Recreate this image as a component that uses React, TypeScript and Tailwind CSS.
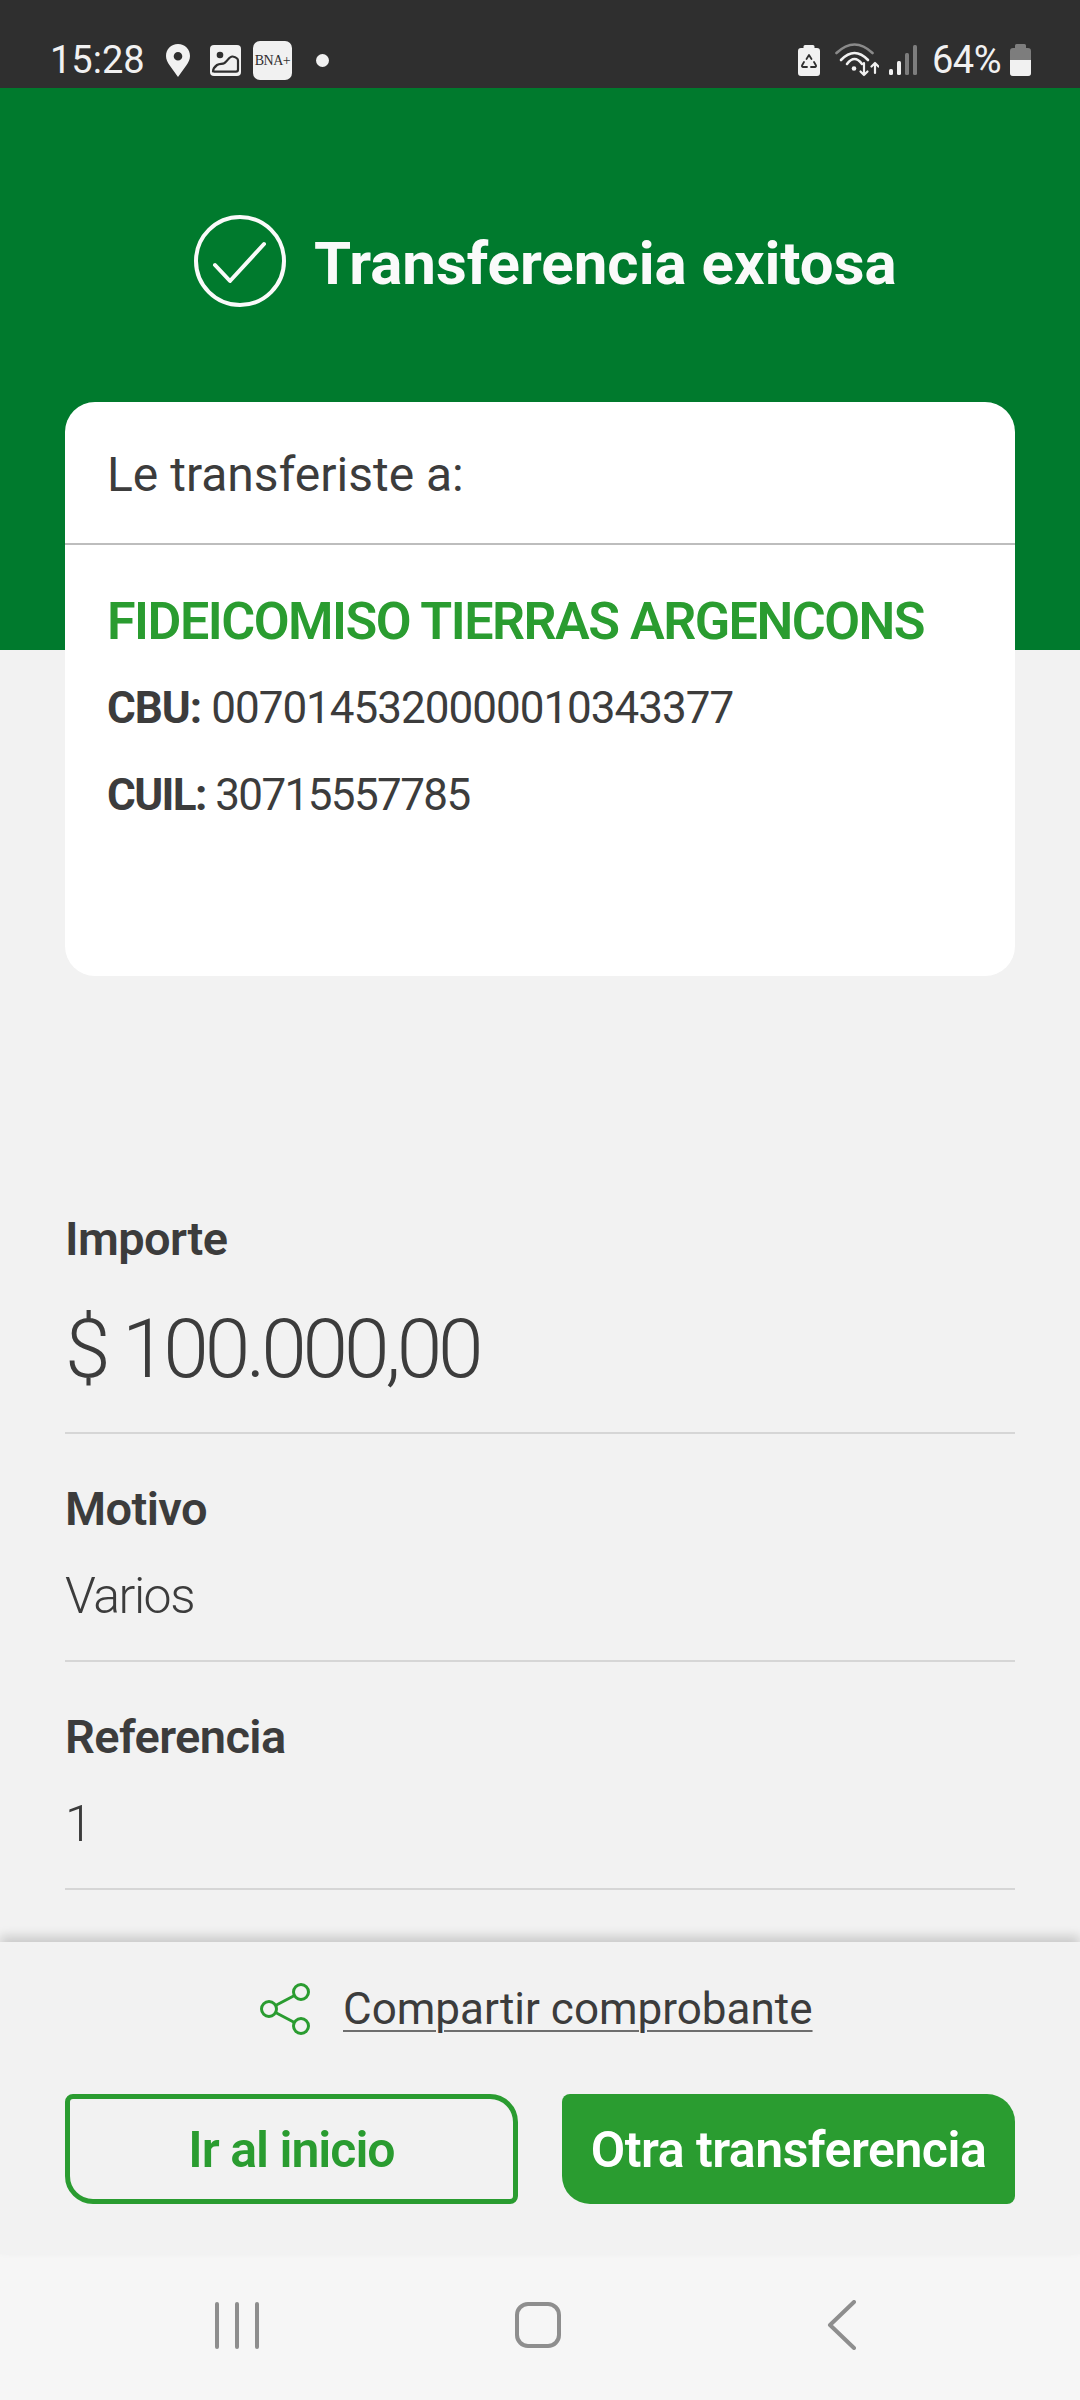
const FONT = "font-['Roboto','Noto_Sans',sans-serif] [font-stretch:90%]";

function Pin() {
  return (
    <svg width="24" height="33" viewBox="0 0 24 33" className="block">
      <path fillRule="evenodd" fill="#f1f1f1" d="M12 0C5 0 0 5.200 0 12c0 3.400 1.600 6.200 3.400 9L12 33l8.600-12c1.800-2.800 3.400-5.600 3.400-9C24 5.200 19 0 12 0zm0 8a4.300 4.300 0 1 1 0 8.600A4.300 4.300 0 0 1 12 8z" />
    </svg>
  );
}

function PictureIcon() {
  return (
    <svg width="31" height="31" viewBox="0 0 31 31" className="block">
      <rect width="31" height="31" rx="4" fill="#f1f1f1" />
      <circle cx="10" cy="10" r="3.300" fill="#2f2f2f" />
      <path d="M3 26.500c0-3 2-5 4-6.500 3-2 5-.5 7.500-2 3-2 5-7 8-6.500 2.500.5 5.500 2 5.500 4v9c0 1.500-.8 2.200-2 2.200H5c-1.300 0-2-.7-2-.2z" fill="none" stroke="#2f2f2f" strokeWidth="2.200" strokeLinejoin="round" />
    </svg>
  );
}

function RecycleBattery() {
  return (
    <svg width="22" height="31" viewBox="0 0 22 31" className="block">
      <path d="M7 0h8a1.500 1.500 0 0 1 1.500 1.500V3H19a3 3 0 0 1 3 3v22a3 3 0 0 1-3 3H3a3 3 0 0 1-3-3V6a3 3 0 0 1 3-3h2.500V1.500A1.500 1.500 0 0 1 7 0z" fill="#f1f1f1" />
      <path d="M8.500 14l2.500-4 2.500 4M16 17l2 3.500c.3.800-.2 1.500-1 1.500h-4M9 22H5c-.8 0-1.300-.7-1-1.500L6 17" fill="none" stroke="#2f2f2f" strokeWidth="1.800" strokeLinecap="round" strokeLinejoin="round" />
    </svg>
  );
}

function Wifi() {
  return (
    <svg width="44" height="34" viewBox="0 0 44 34" fill="none" strokeLinecap="round" strokeLinejoin="round" className="block">
      <path d="M1.500 10Q19.500-7 37.500 10" stroke="#8a8a8a" strokeWidth="2.600" />
      <path d="M6 17Q19.500 3 33 17" stroke="#f1f1f1" strokeWidth="2.600" />
      <path d="M12 21Q19.500 11 27 21" stroke="#f1f1f1" strokeWidth="2.600" />
      <circle cx="19" cy="25.500" r="2.300" fill="#f1f1f1" />
      <path d="M29 20v12m-3.500-3.500L29 32l3.500-3.500" stroke="#f1f1f1" strokeWidth="2.200" />
      <path d="M40 30V20m-3.500 3.500L40 20l3.500 3.500" stroke="#f1f1f1" strokeWidth="2.200" />
    </svg>
  );
}

function Signal() {
  return (
    <svg width="28" height="30" viewBox="0 0 28 30" className="block">
      <rect x="0" y="24" width="4" height="6" rx="1.500" fill="#f1f1f1" />
      <rect x="8" y="16" width="4" height="14" rx="1.500" fill="#f1f1f1" />
      <rect x="16" y="8" width="4" height="22" rx="1.500" fill="#7d7d7d" />
      <rect x="24" y="0" width="4" height="30" rx="1.500" fill="#7d7d7d" />
    </svg>
  );
}

function BatteryIcon() {
  return (
    <svg width="21" height="32" viewBox="0 0 21 32" className="block">
      <path d="M6.500 0h8A1.500 1.500 0 0 1 16 1.500V4h2a3 3 0 0 1 3 3v22a3 3 0 0 1-3 3H3a3 3 0 0 1-3-3V7a3 3 0 0 1 3-3h2V1.500A1.500 1.500 0 0 1 6.500 0z" fill="#7d7d7d" />
      <path d="M0 16h21v13a3 3 0 0 1-3 3H3a3 3 0 0 1-3-3z" fill="#f1f1f1" />
    </svg>
  );
}

function ShareIcon() {
  return (
    <svg width="50" height="52" viewBox="0 0 50 52" fill="none" stroke="#2a9c30" strokeWidth="3" className="block">
      <circle cx="9" cy="26" r="7.500" />
      <circle cx="41" cy="9" r="7.500" />
      <circle cx="41" cy="43" r="7.500" />
      <path d="M15.500 22.500 34.500 12.500M15.500 29.500l19 10" />
    </svg>
  );
}

function CheckCircle() {
  return (
    <svg width="92" height="92" viewBox="0 0 92 92" fill="none" stroke="#fafafa" strokeWidth="4" strokeLinecap="round" strokeLinejoin="round" className="block shrink-0">
      <circle cx="46" cy="46" r="44" />
      <path d="M21 50l15 16 34-37" strokeWidth="4" />
    </svg>
  );
}

function Detail({ label, value, big }: { label: string; value: string; big?: boolean }) {
  return (
    <div className="border-b-2 border-[#d6d6d6]">
      <div className="h-[60px] pt-[2px] text-[47px] leading-[60px] font-semibold tracking-[-0.6px] text-[#3c3c3c]">{label}</div>
      {big ? (
        <div className="mt-[29px] h-[136px] pt-[3px] text-[82px] leading-[100px] font-light tracking-[-4.200px] text-[#3c3c3c]">{value}</div>
      ) : (
        <div className="mt-[27px] h-[96px] pt-[2px] text-[50px] leading-[60px] font-light tracking-[-1.500px] text-[#3c3c3c]">{value}</div>
      )}
    </div>
  );
}

export default function App() {
  return (
    <div className={`${FONT} h-[2400px] w-[1080px] flex flex-col overflow-hidden bg-[#f2f2f2]`}>
      {/* Status bar */}
      <div className="h-[88px] shrink-0 bg-[#2f2f2f] flex items-center pl-[50px] pr-[49px] pt-[32px] [font-stretch:100%] text-[38px] text-[#f1f1f1]">
        <span className="w-[94px] leading-none">15:28</span>
        <span className="ml-[22px]"><Pin /></span>
        <span className="ml-[20px]"><PictureIcon /></span>
        <span className="ml-[12px] w-[39px] h-[39px] rounded-[7px] bg-[#f1f1f1] flex items-center justify-center font-['Liberation_Serif',serif] text-[14px] tracking-[-0.5px] text-[#2f2f2f]">BNA+</span>
        <span className="ml-[24px] w-[13px] h-[13px] rounded-full bg-[#f1f1f1]" />
        <span className="ml-auto"><RecycleBattery /></span>
        <span className="ml-[15px]"><Wifi /></span>
        <span className="ml-[10px]"><Signal /></span>
        <span className="ml-[15px] w-[70px] leading-none tracking-[-0.5px]">64%</span>
        <span className="ml-[8px]"><BatteryIcon /></span>
      </div>

      {/* Green header */}
      <div className="h-[562px] shrink-0 bg-[#007a2d] pt-[127px]">
        <div className="flex items-center pl-[194px]">
          <CheckCircle />
          <h1 className="ml-[28px] h-[92px] pt-[3px] text-[60px] leading-[92px] font-bold text-[#fafafa] whitespace-nowrap">Transferencia exitosa</h1>
        </div>
      </div>

      {/* Card over the header */}
      <div className="relative mt-[-248px] mx-[65px] h-[574px] shrink-0 rounded-[30px] bg-white text-[#3c3c3c]">
        <div className="h-[143px] border-b-2 border-[#bdbdbd] px-[42px] pt-[5px] flex items-center text-[48px]">Le transferiste a:</div>
        <div className="px-[42px] pt-[47px]">
          <div className="text-[52px] leading-[60px] font-semibold tracking-[-1.500px] text-[#2a9c30] whitespace-nowrap">FIDEICOMISO TIERRAS ARGENCONS</div>
          <div className="mt-[26px] text-[44px] leading-[60px] tracking-[-1px]"><b className="font-bold">CBU:</b> 0070145320000010343377</div>
          <div className="mt-[27px] text-[44px] leading-[60px] tracking-[-1.600px]"><b className="font-bold">CUIL:</b> 30715557785</div>
        </div>
      </div>

      {/* Details */}
      <div className="flex-1 px-[65px] pt-[231px]">
        <Detail label="Importe" value="$ 100.000,00" big />
        <div className="pt-[43px]"><Detail label="Motivo" value="Varios" /></div>
        <div className="pt-[43px]"><Detail label="Referencia" value="1" /></div>
      </div>

      {/* Footer */}
      <div className="relative h-[312px] shrink-0 bg-[#f2f2f2] shadow-[0_-6px_10px_rgba(0,0,0,0.16)] px-[65px] pt-[41px]">
        <div className="flex items-center h-[52px] pl-[195px]">
          <ShareIcon />
          <span className="ml-[33px] text-[44px] leading-[52px] underline underline-offset-[6px] decoration-2 decoration-[#6e6e6e] text-[#3c3c3c]">Compartir comprobante</span>
        </div>
        <div className="mt-[59px] flex gap-[44px]">
          <button className="w-[453px] h-[110px] pt-[3px] rounded-tl-[8px] rounded-br-[8px] rounded-tr-[28px] rounded-bl-[28px] border-[5px] border-[#2a9c30] text-[50px] font-semibold tracking-[-1px] text-[#2a9c30]">Ir al inicio</button>
          <button className="w-[453px] h-[110px] pt-[3px] rounded-tl-[8px] rounded-br-[8px] rounded-tr-[28px] rounded-bl-[28px] bg-[#2a9c30] text-[50px] font-semibold tracking-[-0.5px] text-white whitespace-nowrap">Otra transferencia</button>
        </div>
      </div>

      {/* Android nav bar */}
      <div className="h-[146px] shrink-0 bg-[#f6f6f6] flex items-center">
        <div className="ml-[215px] flex gap-[16px] h-[47px] mt-[-4px]">
          <span className="w-[4px] h-full rounded-full bg-[#8e8e8e]" />
          <span className="w-[4px] h-full rounded-full bg-[#8e8e8e]" />
          <span className="w-[4px] h-full rounded-full bg-[#8e8e8e]" />
        </div>
        <span className="ml-[256px] w-[46px] h-[46px] mt-[-4px] rounded-[13px] border-[4px] border-[#8e8e8e]" />
        <svg width="30" height="50" viewBox="0 0 30 50" fill="none" stroke="#8e8e8e" strokeWidth="4" strokeLinecap="round" strokeLinejoin="round" className="ml-[266px] mt-[-4px]">
          <path d="M27 2 3 25l24 23" />
        </svg>
      </div>
    </div>
  );
}
